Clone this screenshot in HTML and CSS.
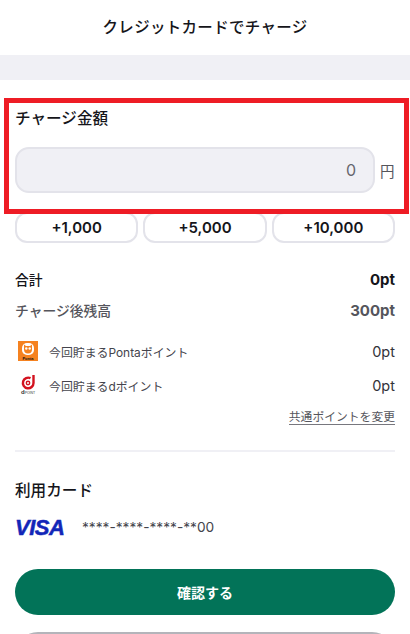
FILE: index.html
```html
<!DOCTYPE html>
<html lang="ja">
<head>
<meta charset="utf-8">
<title>クレジットカードでチャージ</title>
<link rel="stylesheet" href="styles.css">
</head>
<body>
<div class="page">
  <header class="header">クレジットカードでチャージ</header>
  <div class="band"></div>
  <main class="content">
    <section class="amount">
      <h2 class="heading">チャージ金額</h2>
      <div class="input-row">
        <div class="input">0</div>
        <span class="yen">円</span>
      </div>
    </section>
    <div class="presets">
      <button class="preset">+1,000</button>
      <button class="preset">+5,000</button>
      <button class="preset">+10,000</button>
    </div>
    <div class="row total"><span>合計</span><b>0pt</b></div>
    <div class="row balance"><span>チャージ後残高</span><b>300pt</b></div>
    <div class="row point first">
      <svg class="logo" viewBox="0 0 20 20"><rect width="20" height="20" fill="#f58220"/><rect x="4" y="2" width="12" height="12" rx="5" fill="#fff"/><path d="M6 3.500l2 1.500h4l2-1.500v5a4 4 0 0 1-8 0z" fill="#f58220"/><circle cx="8.300" cy="7.500" r="1.200" fill="#fff"/><circle cx="11.700" cy="7.500" r="1.200" fill="#fff"/><text x="10" y="18.500" class="ponta-text">Ponta</text></svg>
      <span class="point-label">今回貯まるPontaポイント</span><span class="point-value">0pt</span>
    </div>
    <div class="row point second">
      <svg class="logo" viewBox="0 0 20 20"><path d="M12.500 3.200a5.300 5.300 0 1 0 3 4.800V0" fill="none" stroke="#d3121f" stroke-width="2.400"/><circle cx="10" cy="8" r="1.700" fill="none" stroke="#d3121f" stroke-width="1.400"/><text x="10" y="19" class="d-text"><tspan class="d-big">d</tspan>POINT</text></svg>
      <span class="point-label">今回貯まるdポイント</span><span class="point-value">0pt</span>
    </div>
    <div class="change"><a class="change-link">共通ポイントを変更</a></div>
    <hr class="divider">
    <h2 class="heading card-heading">利用カード</h2>
    <div class="card">
      <span class="visa">VISA</span>
      <span class="card-number">****-****-****-**00</span>
    </div>
    <button class="primary">確認する</button>
    <button class="secondary"></button>
  </main>
</div>
<div class="highlight"></div>
</body>
</html>
```
FILE: styles.css
```css
* { box-sizing: border-box; }
html, body { margin: 0; height: 100%; overflow: hidden; background: #fff; }
body { position: relative; font-family: Inter, "Noto Sans CJK JP", sans-serif; color: #15151a; }
.page { height: 634px; overflow: hidden; }
.header { height: 55px; padding-bottom: 4px; display: flex; align-items: center; justify-content: center; font-size: 15.500px; font-weight: 500; letter-spacing: 0.300px; }
.band { height: 25px; background: #f0f0f5; }
.content { padding: 27px 15px 0; display: flex; flex-direction: column; }
.heading { margin: 0; font-size: 15.600px; font-weight: 500; line-height: 24px; }
.input-row { margin-top: 16px; display: flex; align-items: center; gap: 5px; }
.input { width: 360px; height: 46px; border: 2px solid #e3e3ea; border-radius: 14px; background: #f0f0f5; display: flex; align-items: center; justify-content: flex-end; padding-right: 17px; font-size: 16px; color: #66666e; }
.yen { font-size: 14.500px; color: #55555c; }
.presets { margin-top: 19px; display: grid; grid-template-columns: repeat(3, 1fr); gap: 5px; }
.preset { height: 31px; padding: 0; background: #fff; border: 2px solid #e3e3ea; border-radius: 12px; font: 600 15px Inter, sans-serif; color: #15151a; }
.row { display: flex; justify-content: space-between; align-items: center; }
.total { margin-top: 25px; height: 22px; font-size: 13.800px; font-weight: 500; }
.total b, .balance b { font-weight: 700; font-size: 15px; }
.balance { margin-top: 9px; height: 22px; font-size: 13.800px; font-weight: 500; color: #55555c; }
.point { font-size: 11.900px; color: #44444c; justify-content: flex-start; height: 20px; }
.point.first { margin-top: 20px; }
.point.second { margin-top: 14px; }
.logo { width: 20px; height: 20px; margin-left: 3px; flex: none; }
.point-label { margin-left: 11px; }
.point-value { margin-left: auto; font-size: 14.500px; color: #33333a; }
.ponta-text { font: 700 4px "Liberation Sans", sans-serif; fill: #111; text-anchor: middle; }
.d-text { font: 400 3.400px "Liberation Sans", sans-serif; fill: #333; text-anchor: middle; }
.d-big { font-size: 6px; font-weight: 700; }
.change { margin-top: 11px; text-align: right; line-height: 18px; }
.change-link { font-size: 11.800px; color: #55555c; border-bottom: 1px solid #77777e; }
.divider { margin: 24px 0 0; border: 0; height: 2px; background: #f0f0f5; }
.card-heading { margin-top: 27px; }
.card { margin-top: 12px; display: flex; align-items: center; height: 24px; }
.visa { width: 67px; margin-top: 2px; font: italic 700 22px "Liberation Sans", sans-serif; color: #1226b8; letter-spacing: -0.500px; -webkit-text-stroke: 0.500px #1226b8; }
.card-number { font-size: 13.700px; color: #44444c; }
.primary { margin-top: 30px; height: 46px; border: 0; border-radius: 23px; background: #027358; color: #fff; font: 700 14px Inter, "Noto Sans CJK JP", sans-serif; flex: none; }
.secondary { margin-top: 17px; height: 46px; border: 0; border-radius: 23px; background: #b4b4ba; flex: none; }
.highlight { position: absolute; left: 4px; top: 98px; width: 405px; height: 116px; border: 5px solid #ee1c25; }
```
